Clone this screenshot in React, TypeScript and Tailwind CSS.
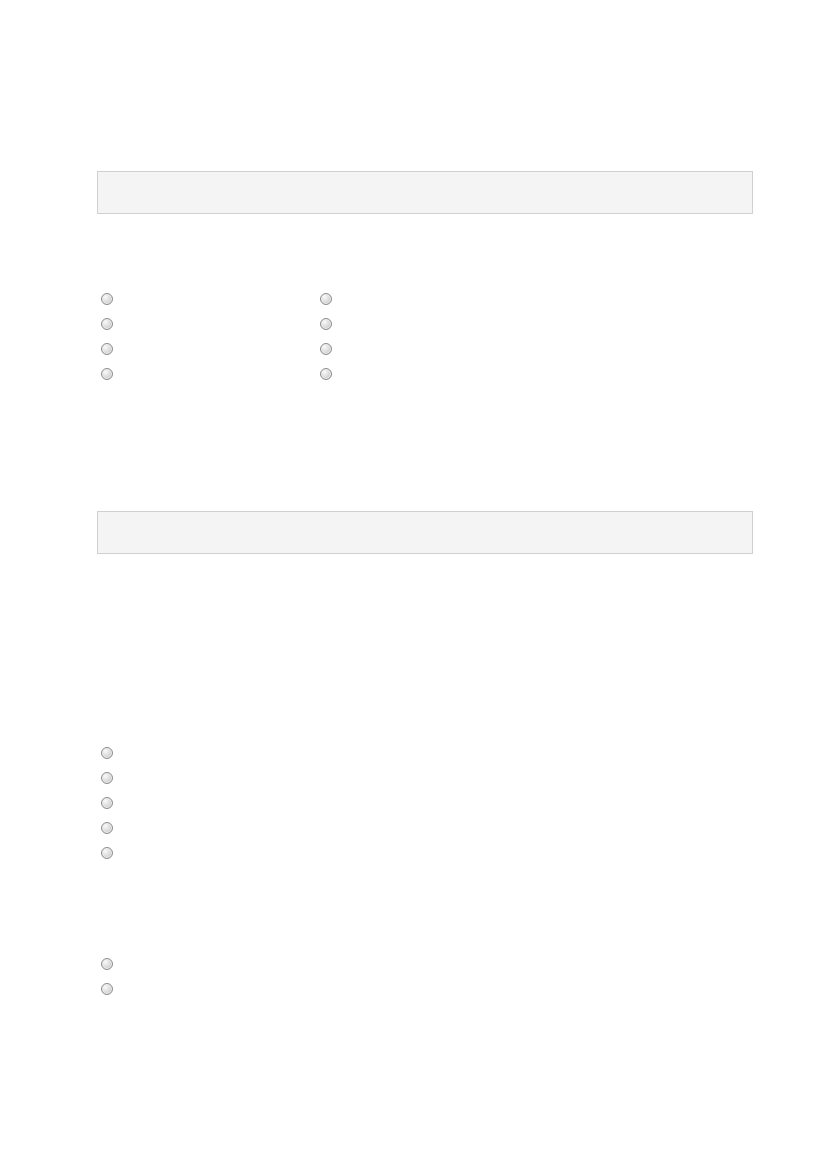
function Radio() {
  return (
    <span className="flex h-[25px] items-center pl-[4px]">
      <span className="block h-[12px] w-[12px] rounded-full border border-[#8c8c8c] bg-radial-[at_35%_30%] from-[#fafafa] via-[#dcdcdc] to-[#bdbdbd] shadow-[inset_0_0_0_1px_#eeeeee]" />
    </span>
  )
}

function Bar() {
  return <div className="h-[43px] w-full border border-[#d0d0d0] bg-[#f4f4f4]" />
}

export default function App() {
  return (
    <div className="min-h-[1169px] w-[827px] bg-white pt-[171px] font-['Liberation_Sans',sans-serif]">
      <div className="ml-[97px] flex w-[656px] flex-col">
        <Bar />

        <div className="mt-[72px] grid grid-cols-[219px_1fr]">
          {Array.from({ length: 8 }).map((_, i) => (
            <Radio key={i} />
          ))}
        </div>

        <div className="mt-[125px]">
          <Bar />
        </div>

        <div className="mt-[186px] flex flex-col">
          {Array.from({ length: 5 }).map((_, i) => (
            <Radio key={i} />
          ))}
        </div>

        <div className="mt-[86px] flex flex-col">
          <Radio />
          <Radio />
        </div>
      </div>
    </div>
  )
}
